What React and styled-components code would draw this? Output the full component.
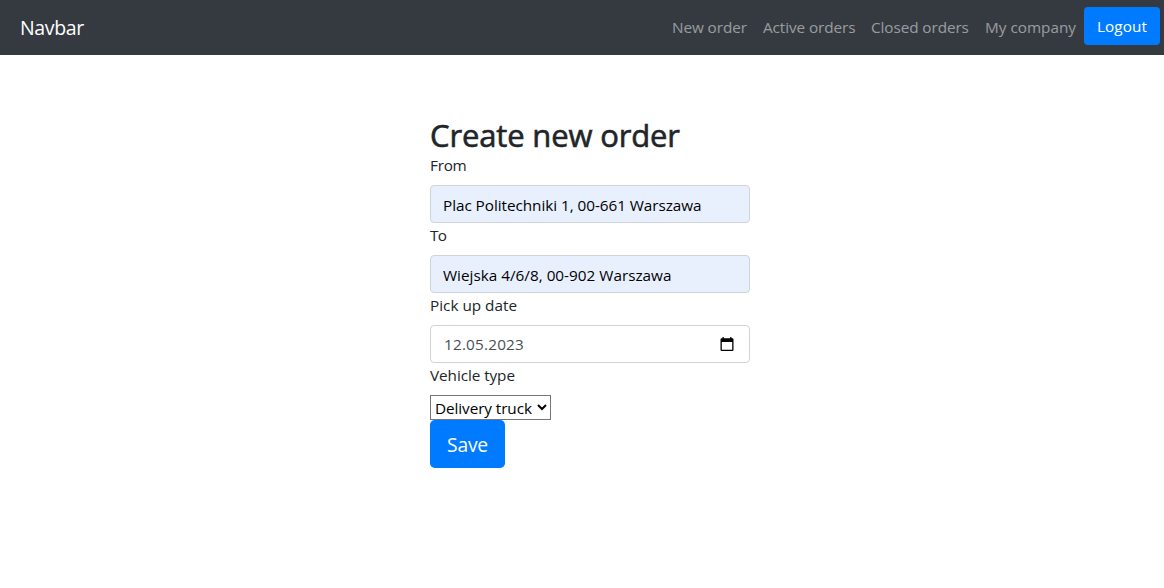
import React from "react";
import styled, { createGlobalStyle } from "styled-components";

const GlobalStyle = createGlobalStyle`
  *, *::before, *::after { box-sizing: border-box; }
  body {
    margin: 0;
    background: #fff;
    color: #212529;
    font: 400 15.3px/24px "Segoe UI", "Open Sans", "Noto Sans", sans-serif;
  }
`;

const Navbar = styled.nav`
  display: flex;
  align-items: center;
  height: 55px;
  padding: 0 4px 0 20px;
  background: #343a40;
`;

const Brand = styled.a`
  margin-right: auto;
  color: #fff;
  font-size: 19.5px;
  line-height: 30px;
  letter-spacing: ${(p) => p.$spacing}px;
`;

const NavItem = styled.a`
  width: ${(p) => p.$width}px;
  padding: 0 8px 1px;
  white-space: nowrap;
  color: rgba(255, 255, 255, 0.5);
  letter-spacing: ${(p) => p.$spacing}px;
`;

const Button = styled.button`
  width: ${(p) => (p.$large ? 75 : 76)}px;
  height: ${(p) => (p.$large ? 48 : 38)}px;
  padding: ${(p) => (p.$large ? "2px 0 0" : 0)};
  border: 0;
  border-radius: ${(p) => (p.$large ? 4.8 : 4)}px;
  background: #007bff;
  color: #fff;
  font: inherit;
  font-size: ${(p) => (p.$large ? 19.3 : 15.3)}px;
  letter-spacing: ${(p) => p.$spacing}px;
`;

const LogoutButton = styled(Button)`
  margin-bottom: 3px;
`;

const Form = styled.form`
  display: flex;
  flex-direction: column;
  align-items: flex-start;
  width: 320px;
  margin: 61px 0 0 430px;
`;

const Title = styled.h1`
  margin: 0 0 -1px;
  font-size: 31px;
  font-weight: 500;
  line-height: 38px;
  white-space: nowrap;
  letter-spacing: ${(p) => p.$spacing}px;
  -webkit-text-stroke: 0.6px currentColor;
`;

const Label = styled.label`
  margin-bottom: 8px;
  letter-spacing: ${(p) => p.$spacing}px;
`;

const Field = styled.div`
  display: flex;
  align-items: center;
  width: 100%;
  height: 38px;
  padding: 0 15px 0 12px;
  border: 1px solid #ced4da;
  border-radius: 4px;
  background: ${(p) => (p.$filled ? "#e8f0fe" : "#fff")};
`;

const Input = styled.input`
  flex: 1;
  min-width: 0;
  height: 24px;
  padding: ${(p) => (p.$date ? "0 0 0 1px" : "2px 0 0")};
  border: 0;
  outline: 0;
  background: transparent;
  color: ${(p) => (p.$date ? "#495057" : "#000")};
  font: inherit;
  letter-spacing: ${(p) => p.$spacing}px;
`;

const Select = styled.select`
  width: 121px;
  height: 25px;
  padding: 0;
  border: 1px solid #767676;
  border-radius: 0;
  background: #fff;
  color: #000;
  font: inherit;
  letter-spacing: ${(p) => p.$spacing}px;
`;

const CalendarIcon = () => (
  <svg width="14" height="15" viewBox="0 0 14 15" aria-hidden="true">
    <path
      fill="#000"
      fillRule="evenodd"
      d="M2.5 0h1.3v1.3h6.4V0h1.3v1.3h.9Q13.5 1.3 13.5 2.5v10.2Q13.5 14 12.3 14H1.7Q.5 14 .5 12.7V2.5Q.5 1.3 1.7 1.3h.8zM1.8 5v7.7h10.4V5z"
    />
  </svg>
);

export default function App() {
  return (
    <>
      <GlobalStyle />
      <Navbar>
        <Brand $spacing={-0.35}>Navbar</Brand>
        <NavItem $width={91} $spacing={-0.08}>New order</NavItem>
        <NavItem $width={108} $spacing={-0.08}>Active orders</NavItem>
        <NavItem $width={114} $spacing={-0.08}>Closed orders</NavItem>
        <NavItem $width={107} $spacing={0}>My company</NavItem>
        <LogoutButton type="button" $spacing={0.05}>Logout</LogoutButton>
      </Navbar>
      <Form>
        <Title $spacing={-0.15}>Create new order</Title>
        <Label htmlFor="from" $spacing={-0.25}>From</Label>
        <Field $filled>
          <Input id="from" $spacing={-0.05} defaultValue="Plac Politechniki 1, 00-661 Warszawa" />
        </Field>
        <Label htmlFor="to" $spacing={-0.6}>To</Label>
        <Field $filled>
          <Input id="to" $spacing={0} defaultValue="Wiejska 4/6/8, 00-902 Warszawa" />
        </Field>
        <Label htmlFor="date" $spacing={0}>Pick up date</Label>
        <Field>
          <Input id="date" $date $spacing={0.2} defaultValue="12.05.2023" />
          <CalendarIcon />
        </Field>
        <Label htmlFor="vehicle" $spacing={-0.07}>Vehicle type</Label>
        <Select id="vehicle" $spacing={-0.08} defaultValue="delivery">
          <option value="delivery">Delivery truck</option>
        </Select>
        <Button type="button" $large $spacing={-0.2}>Save</Button>
      </Form>
    </>
  );
}
